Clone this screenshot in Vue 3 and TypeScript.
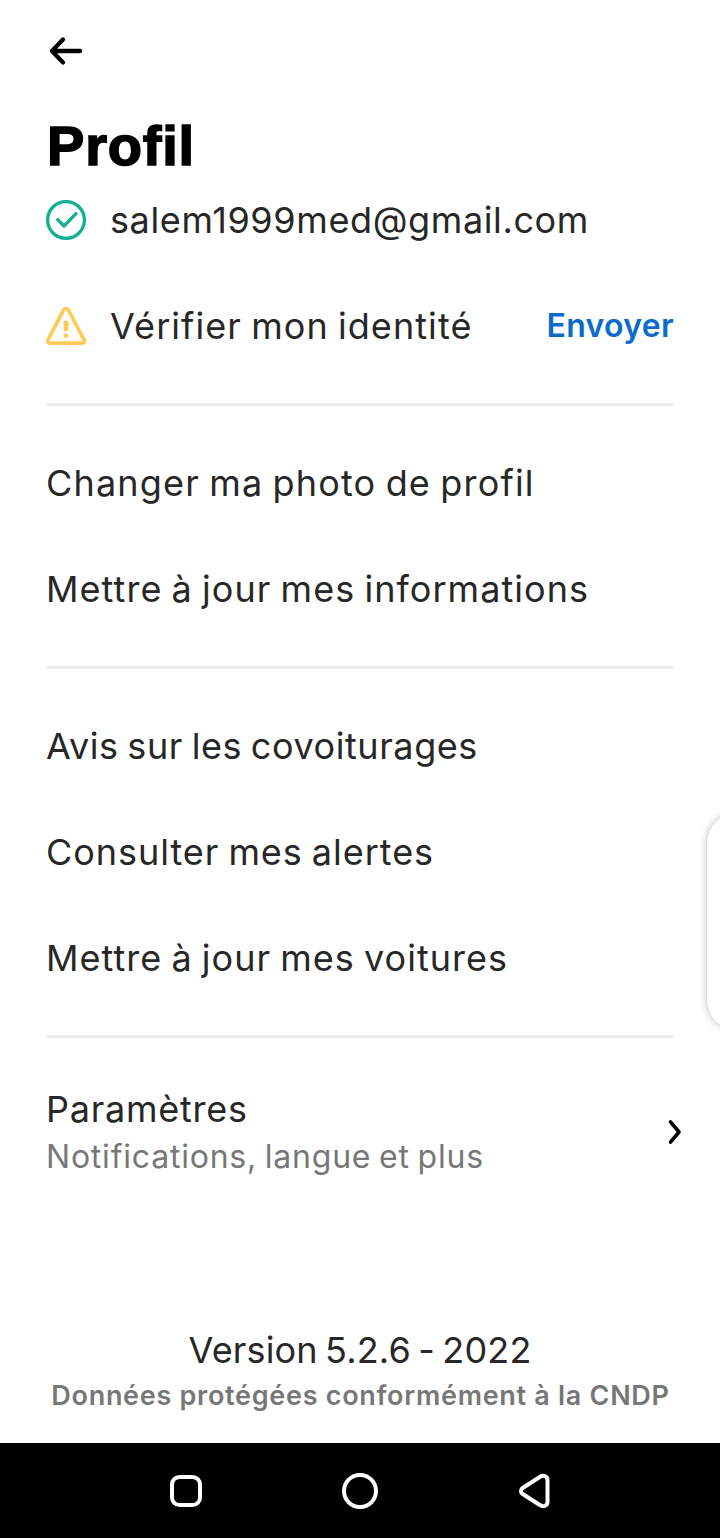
<script setup lang="ts">
interface Entry {
  label: string
  spacing: number
}

const groups: Entry[][] = [
  [
    { label: 'Changer ma photo de profil', spacing: 1.17 },
    { label: 'Mettre à jour mes informations', spacing: 1.05 },
  ],
  [
    { label: 'Avis sur les covoiturages', spacing: 0.58 },
    { label: 'Consulter mes alertes', spacing: 0.96 },
    { label: 'Mettre à jour mes voitures', spacing: 1.03 },
  ],
]
</script>

<template>
  <div class="screen">
    <main class="content">
      <header class="header">
        <svg class="back" width="40" height="40" viewBox="0 0 40 40">
          <path d="M34 20H6M17 8.500L6 20L17 31.500" />
        </svg>
      </header>
      <h1 class="title">Profil</h1>

      <section>
        <div class="row">
          <svg class="status ok" width="40" height="40" viewBox="0 0 40 40">
            <circle cx="20" cy="20" r="18.400" />
            <path d="M11.700 19.600L18 26L30 13.600" />
          </svg>
          <span class="email">salem1999med@gmail.com</span>
        </div>
        <div class="row">
          <svg class="status warn" width="40" height="40" viewBox="0 0 40 40">
            <path class="outline" d="M17.600 3.900L2.100 33.600Q0.700 37.100 4.300 37.100H35.700Q39.300 37.100 37.900 33.600L22.400 3.900Q20 1.100 17.600 3.900Z" />
            <rect x="17.600" y="14.500" width="4.800" height="11" rx="2" />
            <circle cx="20" cy="29.800" r="2.300" />
          </svg>
          <span class="verify">Vérifier mon identité</span>
          <span class="send">Envoyer</span>
        </div>
      </section>

      <section v-for="(group, i) in groups" :key="i" class="group">
        <div v-for="entry in group" :key="entry.label" class="row">
          <span :style="{ letterSpacing: entry.spacing + 'px' }">{{ entry.label }}</span>
        </div>
      </section>

      <section class="group settings">
        <div>
          <div class="settings-title">Paramètres</div>
          <div class="settings-sub">Notifications, langue et plus</div>
        </div>
        <svg class="chevron" width="16" height="30" viewBox="0 0 16 30">
          <path d="M4.500 3.800L13 14L4.500 24.200" />
        </svg>
      </section>

      <footer class="footer">
        <div class="version">Version 5.2.6 - 2022</div>
        <div class="legal">Données protégées conformément à la CNDP</div>
      </footer>
    </main>

    <nav class="navbar">
      <svg width="40" height="40" viewBox="0 0 40 40">
        <rect x="6" y="6" width="28" height="28" rx="7.500" />
      </svg>
      <svg width="40" height="40" viewBox="0 0 40 40">
        <circle cx="20" cy="20" r="16" />
      </svg>
      <svg width="40" height="40" viewBox="0 0 40 40">
        <path d="M8.700 17L25.800 6C29.200 3.800 33.500 4.900 33.500 9.200V30.800C33.500 35.100 29.200 36.200 25.800 34L8.700 23C6.400 21.500 6.400 18.500 8.700 17Z" />
      </svg>
    </nav>

    <div class="edge-panel"></div>
  </div>
</template>

<style>
body {
  margin: 0;
  background: #fff;
}
</style>

<style scoped>
.screen {
  position: relative;
  display: flex;
  flex-direction: column;
  width: 720px;
  height: 1538px;
  overflow: hidden;
  background: #fff;
  color: #272727;
  font-family: Inter, "Liberation Sans", sans-serif;
  font-size: 36px;
  white-space: nowrap;
  word-spacing: -2px;
}
svg {
  display: block;
  flex: none;
  fill: none;
  stroke-linecap: round;
  stroke-linejoin: round;
}
.content {
  display: flex;
  flex: 1;
  flex-direction: column;
  padding: 0 46px;
}
.header {
  height: 94px;
  padding-top: 31px;
}
.back {
  stroke: #000;
  stroke-width: 4.300;
}
.title {
  margin: 0 0 0 1px;
  color: #000;
  font: 700 56px/42px "Liberation Sans", Arial, sans-serif;
  letter-spacing: 0.8px;
  -webkit-text-stroke: 1.6px #000;
}
.row {
  display: flex;
  align-items: center;
  height: 106px;
  line-height: 46px;
}
.status {
  margin-right: 24px;
}
.ok {
  stroke: #14b093;
  stroke-width: 3.300;
}
.warn {
  fill: #ffc957;
}
.warn .outline {
  fill: none;
  stroke: #ffc957;
  stroke-width: 3.600;
}
.email {
  letter-spacing: 0.62px;
}
.verify {
  letter-spacing: 1.07px;
}
.send {
  margin-left: auto;
  color: #0b6bcb;
  font-size: 32px;
  font-weight: 600;
  letter-spacing: 0.3px;
}
.group {
  margin-top: 24px;
  padding-top: 24px;
  border-top: 3px solid #ececec;
}
.settings {
  display: flex;
  align-items: center;
  justify-content: space-between;
  height: 141px;
}
.settings-title {
  line-height: 47px;
  letter-spacing: 0.75px;
}
.settings-sub {
  color: #777;
  font-size: 32px;
  line-height: 47px;
  letter-spacing: 0.78px;
}
.chevron {
  margin-right: -8px;
  stroke: #000;
  stroke-width: 3.600;
}
.footer {
  margin: auto -10px 24px;
  text-align: center;
}
.version {
  line-height: 46px;
  letter-spacing: 0.17px;
  word-spacing: -3px;
}
.legal {
  padding-left: 1px;
  color: #777;
  font-size: 27px;
  font-weight: 600;
  line-height: 46px;
  letter-spacing: 0.71px;
  word-spacing: 0;
}
.navbar {
  display: flex;
  flex: none;
  align-items: center;
  justify-content: center;
  gap: 134px;
  height: 95px;
  background: #000;
}
.navbar svg {
  stroke: #fff;
  stroke-width: 4;
}
.edge-panel {
  position: absolute;
  top: 813px;
  left: 707px;
  width: 60px;
  height: 217px;
  border-radius: 30px;
  background: #fff;
  box-shadow: 0 0 0 0.5px #d0d0d0, 0 0 8px rgba(0, 0, 0, 0.24);
}
</style>
